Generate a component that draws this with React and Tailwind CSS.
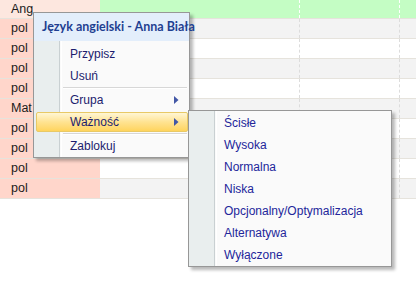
const rows = [
  { label: "Ang", head: true },
  { label: "pol" },
  { label: "pol" },
  { label: "pol" },
  { label: "pol" },
  { label: "Mat" },
  { label: "pol" },
  { label: "pol" },
  { label: "pol" },
  { label: "pol" },
];

const Arrow = () => (
  <svg width="5" height="8" viewBox="0 0 5 8" className="absolute right-[10px] top-[7px]">
    <path d="M0 0 L4.5 4 L0 8 Z" fill="#4257a6" />
  </svg>
);

const Item = ({ label, arrow, active }) => (
  <div className="relative h-[22px] flex items-center">
    {active && (
      <div className="absolute left-[2px] right-[1px] top-[1px] bottom-[1px] rounded-[2px] border border-[#e8c966] bg-gradient-to-b from-[#fff6d4] via-[#ffe391] to-[#ffd45c]" />
    )}
    <span className="relative pl-[36px] text-[#1c1d6e]">{label}</span>
    {arrow && <Arrow />}
  </div>
);

const Sep = () => (
  <div className="h-[2px] ml-[29px] mr-[2px] border-t border-[#d7d7d7] bg-white" />
);

export default function App() {
  return (
    <div className="relative w-[416px] h-[283px] overflow-hidden bg-white font-['Liberation_Sans',Arial,sans-serif]">
      {/* grid */}
      <div className="flex flex-col text-[12.5px] text-[#1b1b1b]">
        {rows.map((r, i) => (
          <div
            key={i}
            className={`flex box-border border-b border-[#e6e3dc] ${r.head ? "h-[19px]" : "h-[20px]"} ${
              r.head ? "bg-[#c4fdc4]" : i % 2 ? "bg-[#f3f3f3]" : "bg-white"
            }`}
          >
            <div
              className={`w-[100px] pl-[11px] flex items-center ${
                r.head ? "bg-[#fde7df]" : "bg-[#ffd6cb]"
              }`}
            >
              {r.label}
            </div>
            <div className={`w-[200px] border-r border-dashed ${r.head ? "border-white" : "border-[#dcdcdc]"}`} />
            <div className={`w-[100px] border-r border-dashed ${r.head ? "border-white" : "border-[#dcdcdc]"}`} />
          </div>
        ))}
      </div>

      {/* main context menu */}
      <div className="absolute left-[33px] top-[12px] w-[157px] border border-[#979797] bg-[#fafafa] shadow-[3px_3px_3px_rgba(0,0,0,0.28)] text-[12px]">
        <div className="h-[28px] bg-[#e3eefb] flex items-center pl-[8px] font-['Lato',sans-serif] text-[12.5px] font-bold whitespace-nowrap text-[#1f3f91]">
          Język angielski - Anna Biała
        </div>
        <div className="relative pt-[2px]">
          <div className="absolute left-0 top-0 bottom-0 w-[26px] bg-[#e9eeee] border-r border-[#c9d0d2]" />
          <div className="absolute left-[27px] top-0 bottom-0 w-px bg-white" />
          <Item label="Przypisz" />
          <Item label="Usuń" />
          <Sep />
          <Item label="Grupa" arrow />
          <Item label="Ważność" arrow active />
          <Sep />
          <Item label="Zablokuj" />
        </div>
      </div>

      {/* submenu */}
      <div className="absolute left-[188px] top-[110px] w-[204px] border border-[#979797] bg-[#fafafa] shadow-[3px_3px_3px_rgba(0,0,0,0.28)] text-[12px]">
        <div className="relative pt-[1px]">
          <div className="absolute left-0 top-0 bottom-0 w-[26px] bg-[#e9eeee] border-r border-[#c9d0d2]" />
          <div className="absolute left-[27px] top-0 bottom-0 w-px bg-white" />
          {["Ścisłe", "Wysoka", "Normalna", "Niska", "Opcjonalny/Optymalizacja", "Alternatywa", "Wyłączone"].map(
            (t) => (
              <div key={t} className="relative h-[22px] flex items-center pl-[35px] text-[#23269a]">
                {t}
              </div>
            )
          )}
        </div>
      </div>
    </div>
  );
}
